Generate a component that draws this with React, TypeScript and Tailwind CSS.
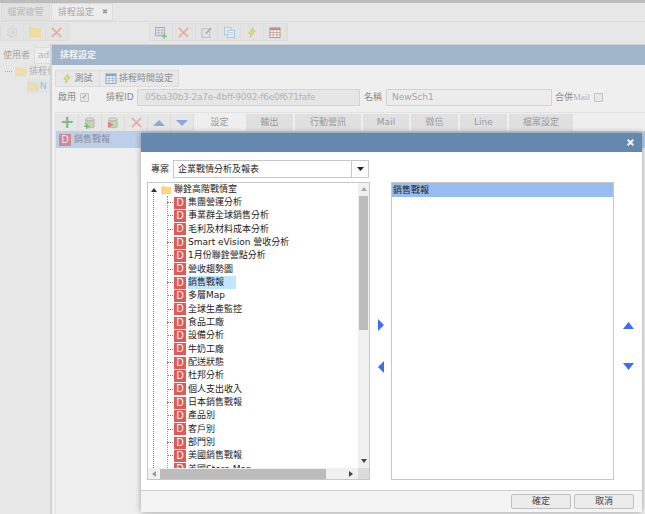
import { Settings, X } from 'lucide-react';

const treeItems = [
  '集團營運分析',
  '事業群全球銷售分析',
  '毛利及材料成本分析',
  'Smart eVision 營收分析',
  '1月份聯銓營點分析',
  '營收趨勢圖',
  '銷售戰報',
  '多層Map',
  '全球生產監控',
  '食品工廠',
  '設備分析',
  '牛奶工廠',
  '配送狀態',
  '杜邦分析',
  '個人支出收入',
  '日本銷售戰報',
  '產品別',
  '客戶別',
  '部門別',
  '美國銷售戰報',
  '美國Store Map',
];

const font = "font-['DejaVu_Sans','Noto_Sans_CJK_TC',sans-serif]";

const DBadge = () => (
  <span className="flex h-[12px] w-[12px] shrink-0 items-center justify-center bg-[#e05a5a] font-['Liberation_Sans',sans-serif] text-[10px] leading-none text-white">
    D
  </span>
);

const Folder = ({ className }: { className: string }) => (
  <svg viewBox="0 0 12 10" className={className}>
    <path d="M0 1.5 L0.5 0.5 H4 L5 1.5 H11.5 V10 H0 Z" fill="#fbd67a" stroke="#eec566" strokeWidth="0.5" />
  </svg>
);

const ToolCell = ({ children }: { children: React.ReactNode }) => (
  <div className="flex h-[17px] w-[23px] items-center justify-center border-r border-[#dcdcdc]">{children}</div>
);

const Cross = () => (
  <svg viewBox="0 0 12 12" className="h-[11px] w-[11px]">
    <path d="M1 1 L11 11 M11 1 L1 11" stroke="#e8a296" strokeWidth="1.6" />
  </svg>
);

const Tri = ({ dir, className }: { dir: 'up' | 'down' | 'left' | 'right'; className: string }) => {
  const points = {
    up: '0,12 6,0 12,12',
    down: '0,0 12,0 6,12',
    left: '12,0 12,12 0,6',
    right: '0,0 0,12 12,6',
  }[dir];
  return (
    <svg viewBox="0 0 12 12" preserveAspectRatio="none" className={className}>
      <polygon points={points} fill="currentColor" />
    </svg>
  );
};

const Bolt = () => (
  <svg viewBox="0 0 12 14" className="h-[11px] w-[10px]">
    <path d="M7 1 L2 8 H5 L4 13 L10 5 H7 Z" fill="#e8e070" stroke="#a9b85a" strokeWidth="0.7" />
  </svg>
);

const Calendar = ({ blue }: { blue?: boolean }) => {
  const line = blue ? '#8aa4c8' : '#b78f88';
  return (
    <svg viewBox="0 0 12 12" className="h-[11px] w-[12px]">
      <rect x="0.5" y="1" width="11" height="10.5" fill="#f6f4f2" stroke={line} />
      <rect x="0.5" y="1" width="11" height="2.5" fill={line} />
      <path d="M0.5 6 H11.5 M0.5 8.5 H11.5 M4 3.5 V11.5 M8 3.5 V11.5" stroke={line} strokeWidth="0.7" />
    </svg>
  );
};

const GridAdd = () => (
  <svg viewBox="0 0 13 13" className="h-[12px] w-[12px]">
    <rect x="0.5" y="0.5" width="10" height="9" fill="#e8e8f0" stroke="#a8a8bc" />
    <path d="M0.5 3.5 H10.5 M0.5 6.5 H10.5 M4 0.5 V9.5 M7.5 0.5 V9.5" stroke="#a8a8bc" strokeWidth="0.7" />
    <path d="M10 7 V13 M7 10 H13" stroke="#8cc08c" strokeWidth="1.6" />
  </svg>
);

const Note = () => (
  <svg viewBox="0 0 12 12" className="h-[11px] w-[11px]">
    <rect x="1" y="2" width="8.5" height="9.5" fill="none" stroke="#bcbcbc" />
    <path d="M5 7.5 L11 1" stroke="#b0a890" strokeWidth="1.6" />
  </svg>
);

const Copy = () => (
  <svg viewBox="0 0 12 12" className="h-[11px] w-[11px]">
    <rect x="0.5" y="0.5" width="7" height="8" fill="#e4eef4" stroke="#a4c8dc" />
    <rect x="4" y="3.5" width="7.5" height="8" fill="#e4eef4" stroke="#a4c8dc" />
    <path d="M5.5 6 H10 M5.5 8 H10" stroke="#a4c8dc" strokeWidth="0.7" />
  </svg>
);

const Db = ({ plus }: { plus?: boolean }) => (
  <svg viewBox="0 0 13 13" className="h-[12px] w-[12px]">
    <path d="M2 2.5 V10.5 C2 12 11 12 11 10.5 V2.5" fill="#c6d4b0" stroke="#a6a69c" strokeWidth="0.7" />
    <ellipse cx="6.5" cy="2.5" rx="4.5" ry="1.6" fill="#dcdcd0" stroke="#a6a69c" strokeWidth="0.7" />
    {plus ? (
      <path d="M3 7 V13 M0 10 H6" stroke="#7fb883" strokeWidth="1.6" />
    ) : (
      <path d="M1 5 L7 8.5 L1 12 Z" fill="#e4808c" />
    )}
  </svg>
);

const Tab = ({ label, w, active }: { label: string; w: string; active?: boolean }) => (
  <div
    className={`flex h-[17px] ${w} items-center justify-center border-r-2 border-[#f0f0f0] text-[9px] leading-none text-[#9a9a9a] ${
      active ? 'bg-[#efefef]' : 'bg-[#e0e0e0]'
    }`}
  >
    {label}
  </div>
);

export default function App() {
  return (
    <div className={`relative h-[514px] w-[645px] overflow-hidden bg-[#e7e7e7] ${font}`}>
      {/* page behind the dialogs */}
      <div className="h-[3px] bg-[#bdbdbd]" />
      <div className="flex h-[19px] items-end gap-[1px] border-b border-[#dedede] pl-[1px]">
        <div className="flex h-[18px] w-[49px] items-center justify-center border border-[#dcdcdc] bg-[#e2e2e2] text-[9px] leading-none text-[#b8b8b8]">
          檔案總管
        </div>
        <div className="flex h-[18px] w-[62px] items-center gap-[8px] border border-[#dcdcdc] bg-[#ececec] pl-[6px] text-[9px] leading-none text-[#a8a8a8]">
          排程設定
          <span className="text-[7px] font-bold text-[#9a9a9a]">✖</span>
        </div>
      </div>
      <div className="flex items-start pt-[1px]">
        <div className="flex h-[18px] w-[69px] border border-[#dedede] bg-[#e3e3e3]">
          <div className="flex w-[23px] items-center justify-center">
            <Settings size={13} strokeWidth={1.4} className="text-[#c8c8c8]" />
          </div>
          <div className="flex w-[23px] items-center justify-center border-x border-[#dedede]">
            <Folder className="h-[10px] w-[12px] opacity-60" />
          </div>
          <div className="flex w-[23px] items-center justify-center">
            <Cross />
          </div>
        </div>
        <div className="ml-[80px] flex h-[18px] w-[139px] border border-[#dedede] bg-[#e3e3e3]">
          <ToolCell>
            <GridAdd />
          </ToolCell>
          <ToolCell>
            <Cross />
          </ToolCell>
          <ToolCell>
            <Note />
          </ToolCell>
          <ToolCell>
            <Copy />
          </ToolCell>
          <ToolCell>
            <Bolt />
          </ToolCell>
          <ToolCell>
            <Calendar />
          </ToolCell>
        </div>
      </div>
      <div className="mt-[6px] flex items-center gap-[4px] pl-[3px] text-[9px] leading-none text-[#a8a8a8]">
        使用者
        <span className="flex h-[17px] flex-1 items-center border border-[#dedede] bg-[#ececec] pl-[3px] text-[#b4b4b4]">ad</span>
      </div>
      <div className="mt-[1px] flex h-[13px] items-center pl-[5px] text-[9px] leading-none text-[#b0b0b0]">
        <span className="mr-[3px] h-0 w-[7px] border-t border-dotted border-[#aaa]" />
        <Folder className="mr-[2px] h-[9px] w-[12px] opacity-50" />
        排程作業
      </div>
      <div className="ml-[27px] mt-[1px] flex h-[14px] items-center gap-[1px] bg-[#dde5ec] text-[9px] leading-none text-[#b8b8b8]">
        <Folder className="h-[9px] w-[12px] opacity-50" />N
      </div>

      {/* schedule settings dialog */}
      <div className="absolute left-[50px] top-[44px] flex h-[470px] w-[600px] flex-col border-l-2 border-t border-[#d2d2d2] bg-[#efefef]">
        <div className="flex h-[20px] shrink-0 items-center bg-[#a1b5ca] pl-[8px] text-[9px] font-bold leading-none text-[#f2f2f2]">
          排程設定
        </div>
        <div className="ml-[3px] mt-[5px] flex h-[17px] w-[124px] border border-[#dcdcdc] bg-[#e8e8e8] text-[9px] leading-none text-[#8a8a8a]">
          <div className="flex w-[44px] items-center justify-center gap-[2px] border-r border-[#dcdcdc]">
            <Bolt />
            測試
          </div>
          <div className="flex flex-1 items-center justify-center gap-[2px]">
            <Calendar blue />
            排程時間設定
          </div>
        </div>
        <div className="ml-[6px] mt-[1px] flex h-[18px] items-center text-[9px] leading-none text-[#8c8c8c]">
          <span className="w-[22px]">啟用</span>
          <span className="flex h-[9px] w-[9px] items-center justify-center rounded-[1px] border border-[#c4c4c4] bg-[#e4e4e4] text-[7px] leading-none text-[#888]">
            ✓
          </span>
          <span className="ml-[17px] w-[27px] whitespace-nowrap">排程ID</span>
          <span className="ml-[4px] flex h-[17px] w-[223px] items-center border border-[#d4d4d4] bg-[#e6e6e6] pl-[7px] text-[9px] tracking-[-0.25px] text-[#b4b4b4]">
            05ba30b3-2a7e-4bff-9092-f6e0f671fafe
          </span>
          <span className="ml-[4px] w-[18px]">名稱</span>
          <span className="ml-[4px] flex h-[17px] w-[166px] items-center border border-[#d4d4d4] bg-[#ececec] pl-[5px] text-[9px] text-[#a8a8a8]">
            NewSch1
          </span>
          <span className="ml-[3px] whitespace-nowrap">
            合併<span className="font-['Liberation_Serif',serif] text-[#b0b0b0]">Mail</span>
          </span>
          <span className="ml-[4px] h-[9px] w-[9px] rounded-[1px] border border-[#c4c4c4] bg-[#e8e8e8]" />
        </div>
        <div className="ml-[3px] mt-[6px] flex flex-1 flex-col border-l border-t border-[#e2e2e2]">
          <div className="mt-[1px] flex h-[17px] items-center">
            <div className="flex h-[17px] w-[138px] bg-[#e6e6e6]">
              <ToolCell>
                <span className="text-[17px] font-bold leading-none text-[#7fb883]">+</span>
              </ToolCell>
              <ToolCell>
                <Db plus />
              </ToolCell>
              <ToolCell>
                <Db />
              </ToolCell>
              <ToolCell>
                <Cross />
              </ToolCell>
              <ToolCell>
                <Tri dir="up" className="h-[6px] w-[12px] text-[#8aa8de]" />
              </ToolCell>
              <ToolCell>
                <Tri dir="down" className="h-[6px] w-[12px] text-[#8aa8de]" />
              </ToolCell>
            </div>
            <div className="ml-[1px] flex">
              <Tab label="設定" w="w-[51px]" active />
              <Tab label="輸出" w="w-[49px]" />
              <Tab label="行動營訊" w="w-[68px]" />
              <Tab label="Mail" w="w-[48px]" />
              <Tab label="微信" w="w-[49px]" />
              <Tab label="Line" w="w-[49px]" />
              <Tab label="檔案設定" w="w-[66px]" />
            </div>
          </div>
          <div className="flex h-[17px] items-center gap-[3px] bg-[#bccfe8] pl-[3px] text-[9px] leading-none text-[#8c8c94]">
            <span className="opacity-60">
              <DBadge />
            </span>
            銷售戰報
          </div>
        </div>
      </div>

      {/* project picker dialog */}
      <div className="absolute left-[141px] top-[133px] flex h-[379px] w-[501px] flex-col bg-white shadow-[0_0_6px_rgba(0,0,0,0.35)]">
        <div className="flex h-[19px] shrink-0 items-center justify-end bg-[#6588ae] pr-[7px]">
          <X size={9} strokeWidth={5} className="text-white" />
        </div>
        <div className="flex min-h-0 flex-1">
          <div className="ml-[6px] flex w-[223px] flex-col">
            <div className="mt-[8px] flex h-[18px] items-center">
              <span className="w-[26px] pl-[4px] text-[9px] leading-none text-[#333]">專案</span>
              <div className="flex h-[18px] w-[196px] border border-[#c8c8c8]">
                <span className="flex flex-1 items-center pl-[4px] text-[9px] leading-none text-[#222]">企業戰情分析及報表</span>
                <span className="flex w-[17px] items-center justify-center border-l border-[#c8c8c8]">
                  <Tri dir="down" className="h-[4px] w-[7px] text-[#222]" />
                </span>
              </div>
            </div>
            <div className="mt-[4px] flex h-[298px] flex-col border border-[#c8c8c8]">
              <div className="flex min-h-0 flex-1">
                <div className="relative min-w-0 flex-1 overflow-hidden">
                  <div className="relative flex h-[13px] items-center whitespace-nowrap pl-[13px] text-[9px] leading-[13px] text-[#222]">
                    <Folder className="mr-[2px] h-[8px] w-[11px]" />
                    聯銓高階戰情室
                  </div>
                  <div className="absolute bottom-0 left-[5px] top-[8px] border-l border-dotted border-[#777]" />
                  <div className="absolute bottom-0 left-[19px] top-[13px] border-l border-dotted border-[#999]" />
                  <div className="absolute left-[3px] top-[5px] h-0 w-0 border-x-[3px] border-b-[4px] border-x-transparent border-b-[#333]" />
                  {treeItems.map((name) => {
                    const selected = name === '銷售戰報';
                    return (
                      <div key={name} className="flex h-[13.33px] items-center whitespace-nowrap pl-[19px]">
                        <span className="h-0 w-[6px] border-t border-dotted border-[#777]" />
                        <span className="ml-[1px]">
                          <DBadge />
                        </span>
                        <span
                          className={`ml-[2px] text-[9px] leading-[13px] text-[#222] ${
                            selected ? 'w-[48px] bg-[#bfe6fb]' : ''
                          }`}
                        >
                          {name}
                        </span>
                      </div>
                    );
                  })}
                </div>
                <div className="flex w-[11px] flex-col items-center bg-[#f0f0f0]">
                  <Tri dir="up" className="mt-[4px] h-[4px] w-[6px] text-[#aaa]" />
                  <div className="mt-[5px] h-[134px] w-[9px] bg-[#bcbcbc]" />
                  <div className="flex-1" />
                  <Tri dir="down" className="mb-[5px] h-[4px] w-[6px] text-[#444]" />
                </div>
              </div>
              <div className="flex h-[11px] shrink-0 items-center bg-[#f0f0f0]">
                <Tri dir="left" className="ml-[4px] h-[6px] w-[4px] text-[#999]" />
                <div className="ml-[4px] h-[10px] w-[166px] bg-[#bcbcbc]" />
                <Tri dir="right" className="ml-[23px] h-[6px] w-[4px] text-[#444]" />
                <div className="ml-auto h-full w-[11px] bg-[#dcdcdc]" />
              </div>
            </div>
          </div>
          <div className="flex w-[21px] flex-col items-center">
            <Tri dir="right" className="mt-[167px] h-[12px] w-[6px] text-[#3b6ff0]" />
            <Tri dir="left" className="mt-[30px] h-[12px] w-[6px] text-[#3b6ff0]" />
          </div>
          <div className="mt-[30px] h-[298px] w-[223px] border border-[#c8c8c8]">
            <div className="flex h-[14px] items-center bg-[#98bbf0] pl-[1px] text-[9px] leading-none text-[#222]">銷售戰報</div>
          </div>
          <div className="flex flex-1 flex-col items-center">
            <Tri dir="up" className="mt-[170px] h-[7px] w-[11px] text-[#3b6ff0]" />
            <Tri dir="down" className="mt-[34px] h-[7px] w-[11px] text-[#3b6ff0]" />
          </div>
        </div>
        <div className="flex h-[22px] shrink-0 items-center justify-end gap-[3px] border-t border-[#cfcfcf] bg-[#f4f4f4] pr-[8px]">
          <button className="h-[15px] w-[60px] rounded-[2px] border border-[#c0c0c0] bg-[#ececec] text-[9px] leading-[13px] text-[#444]">確定</button>
          <button className="h-[15px] w-[60px] rounded-[2px] border border-[#c0c0c0] bg-[#ececec] text-[9px] leading-[13px] text-[#444]">取消</button>
        </div>
      </div>
    </div>
  );
}
